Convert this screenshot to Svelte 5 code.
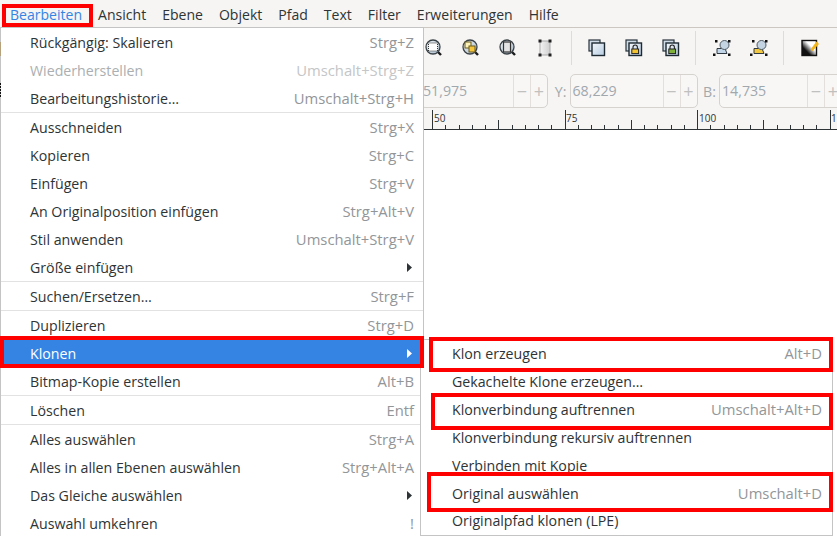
<script>
	const menubar = ['Ansicht', 'Ebene', 'Objekt', 'Pfad', 'Text', 'Filter', 'Erweiterungen', 'Hilfe'];

	// main "Bearbeiten" menu, one array per separated block
	const sections = [
		[
			{ label: 'Rückgängig: Skalieren', key: 'Strg+Z' },
			{ label: 'Wiederherstellen', key: 'Umschalt+Strg+Z', off: true },
			{ label: 'Bearbeitungshistorie…', key: 'Umschalt+Strg+H' }
		],
		[
			{ label: 'Ausschneiden', key: 'Strg+X' },
			{ label: 'Kopieren', key: 'Strg+C' },
			{ label: 'Einfügen', key: 'Strg+V' },
			{ label: 'An Originalposition einfügen', key: 'Strg+Alt+V' },
			{ label: 'Stil anwenden', key: 'Umschalt+Strg+V' },
			{ label: 'Größe einfügen', more: true }
		],
		[{ label: 'Suchen/Ersetzen…', key: 'Strg+F' }],
		[
			{ label: 'Duplizieren', key: 'Strg+D' },
			{ label: 'Klonen', more: true, active: true },
			{ label: 'Bitmap-Kopie erstellen', key: 'Alt+B' }
		],
		[{ label: 'Löschen', key: 'Entf' }],
		[
			{ label: 'Alles auswählen', key: 'Strg+A' },
			{ label: 'Alles in allen Ebenen auswählen', key: 'Strg+Alt+A' },
			{ label: 'Das Gleiche auswählen', more: true },
			{ label: 'Auswahl umkehren', key: '!' }
		]
	];

	const clones = [
		{ label: 'Klon erzeugen', key: 'Alt+D' },
		{ label: 'Gekachelte Klone erzeugen…' },
		{ label: 'Klonverbindung auftrennen', key: 'Umschalt+Alt+D' },
		{ label: 'Klonverbindung rekursiv auftrennen' },
		{ label: 'Verbinden mit Kopie' },
		{ label: 'Original auswählen', key: 'Umschalt+D' },
		{ label: 'Originalpfad klonen (LPE)' }
	];

	const fields = [
		{ name: '', value: '51,975' },
		{ name: 'Y:', value: '68,229' },
		{ name: 'B:', value: '14,735' }
	];

	// ruler: 132.5px per 25 units, one tick every 2.5 units
	const step = 13.25;
	const start = 432;
	const ticks = Array.from({ length: 33 }, (_, i) => ({
		x: Math.round(start + i * step) + 0.5,
		h: i % 10 === 0 ? 19 : i % 5 === 0 ? 9 : 4
	}));
	const rulerLabels = [
		{ x: 434, text: '50' },
		{ x: 566, text: '75' },
		{ x: 699, text: '100' },
		{ x: 831, text: '1' }
	];
</script>

{#snippet row(item)}
	<div class="row" class:off={item.off} class:active={item.active}>
		<span>{item.label}</span>
		{#if item.key}<span class="key">{item.key}</span>{/if}
		{#if item.more}<svg class="more" viewBox="0 0 5 9" width="5" height="9"><path d="M0 0L5 4.5L0 9Z" /></svg>{/if}
	</div>
{/snippet}

{#snippet lens(inner)}
	<svg viewBox="0 0 18 18" width="18" height="18">
		<defs>
			<linearGradient id="glass" x1="0" y1="0" x2="1" y2="1">
				<stop offset="0" stop-color="#eef2f5" />
				<stop offset="1" stop-color="#a9bccb" />
			</linearGradient>
		</defs>
		<path d="M12.5 12.5L16 16" stroke="#1b1b1b" stroke-width="2.4" />
		<circle cx="8" cy="8" r="7" fill="url(#glass)" stroke="#3a4247" stroke-width="1.3" />
		{@render inner()}
	</svg>
{/snippet}

{#snippet lensDots()}
	<rect x="3.5" y="4" width="9" height="8" fill="#fff" stroke="#333" stroke-dasharray="1 1" />
{/snippet}
{#snippet lensSquares()}
	<rect x="3" y="3" width="6" height="6" fill="#fdf2b8" stroke="#6b5a1c" />
	<rect x="7" y="7" width="6" height="6" fill="#f5c63c" stroke="#6b5a1c" />
{/snippet}
{#snippet lensPage()}
	<rect x="4.5" y="3" width="7" height="10" fill="#e4e4e4" stroke="#333" stroke-width="1.2" />
{/snippet}

{#snippet stacked(lock)}
	<svg viewBox="0 0 18 18" width="18" height="18">
		<defs>
			<linearGradient id="sheet" x1="0" y1="0" x2="1" y2="1">
				<stop offset="0" stop-color="#f2f6fa" />
				<stop offset="1" stop-color="#b7cde2" />
			</linearGradient>
		</defs>
		<rect x="1" y="1" width="11" height="11" fill="#cfdce8" stroke="#26323a" stroke-width="1.2" />
		<rect x="4" y="4" width="12.5" height="12.5" fill="url(#sheet)" stroke="#1e2a32" stroke-width="1.4" />
		{#if lock}
			<path d="M8 10V8.2a2.2 2.2 0 0 1 4.4 0V10" fill="none" stroke="#222" stroke-width="1.1" />
			<rect x="6.8" y="10" width="6.8" height="4.6" fill={lock} stroke="#222" />
		{/if}
	</svg>
{/snippet}

{#snippet marked(fill)}
	<svg viewBox="0 0 18 18" width="18" height="18">
		<path d="M4 9.5H12L14 14.5H4Z" fill={fill} stroke="#2f3a42" />
		<circle cx="11.5" cy="6" r="4.5" fill="#c5d4e2" stroke="#4d5a64" />
		<g fill="#111">
			<rect x="0" y="14.5" width="2.5" height="2.5" />
			<rect x="15" y="14.5" width="2.5" height="2.5" />
			<rect x="2" y="1" width="2.5" height="2.5" />
			<rect x="15" y="1" width="2.5" height="2.5" />
		</g>
	</svg>
{/snippet}

<div class="app">
	<nav class="menubar">
		<span class="item current">Bearbeiten</span>
		{#each menubar as name}
			<span class="item">{name}</span>
		{/each}
	</nav>

	<div class="toolbar">
		<div class="tool">{@render lens(lensDots)}</div>
		<div class="tool">{@render lens(lensSquares)}</div>
		<div class="tool">{@render lens(lensPage)}</div>
		<div class="tool">
			<svg viewBox="0 0 14 18" width="14" height="18">
				<defs>
					<linearGradient id="page" x1="0" y1="0" x2="1" y2="0">
						<stop offset="0" stop-color="#f4f4f4" />
						<stop offset="1" stop-color="#cfcfcf" />
					</linearGradient>
				</defs>
				<rect x="2" y="2" width="10" height="14" fill="url(#page)" stroke="#a8a8a8" />
				<g fill="#222">
					<rect x="0.5" y="0.5" width="3" height="3" />
					<rect x="10.5" y="0.5" width="3" height="3" />
					<rect x="0.5" y="14.5" width="3" height="3" />
					<rect x="10.5" y="14.5" width="3" height="3" />
				</g>
			</svg>
		</div>
		<i class="divider first"></i>
		<div class="tool">{@render stacked('')}</div>
		<div class="tool">{@render stacked('#f4c430')}</div>
		<div class="tool">{@render stacked('#7fb03a')}</div>
		<i class="divider"></i>
		<div class="tool">{@render marked('#c3d6e8')}</div>
		<div class="tool">{@render marked('#f2c843')}</div>
		<i class="divider"></i>
		<div class="tool">
			<svg viewBox="0 0 18 18" width="18" height="18">
				<defs>
					<linearGradient id="swatch" x1="0" y1="1" x2="1" y2="0">
						<stop offset="0.3" stop-color="#111" />
						<stop offset="0.62" stop-color="#fff" />
					</linearGradient>
				</defs>
				<path d="M1 1.5H14L1 16.5Z" fill="#fff" />
				<rect x="1" y="1.5" width="14.5" height="15" fill="url(#swatch)" stroke="#111" stroke-width="1.4" />
				<path d="M9.5 10.5L15.5 2.5L18 5L11.5 12Z" fill="#f1b51c" />
			</svg>
		</div>
	</div>

	<div class="fields">
		{#each fields as f}
			{#if f.name}<span class="name">{f.name}</span>{/if}
			<div class="spin">
				<span class="value">{f.value}</span>
				<span class="btn">−</span>
				<span class="btn">+</span>
			</div>
		{/each}
	</div>

	<svg class="ruler" viewBox="0 0 837 20" width="837" height="20">
		{#each ticks as t}
			<line x1={t.x} x2={t.x} y1={19 - t.h} y2="19" />
		{/each}
		{#each rulerLabels as l}
			<text x={l.x} y="12">{l.text}</text>
		{/each}
		<rect x="0" y="19" width="837" height="1" />
	</svg>

	<div class="canvas"></div>

	<!-- slivers of the canvas showing left of the open menu -->
	<i class="sliver tan"></i>
	<i class="sliver dots"></i>

	<div class="menu main">
		{#each sections as section, i}
			{#if i > 0}<hr />{/if}
			{#each section as item}
				{@render row(item)}
			{/each}
		{/each}
	</div>

	<div class="menu sub">
		{#each clones as item}
			{@render row(item)}
		{/each}
	</div>

	<!-- red annotation frames -->
	<i class="mark m-bar"></i>
	<i class="mark m-klonen"></i>
	<i class="mark m-erzeugen"></i>
	<i class="mark m-trennen"></i>
	<i class="mark m-original"></i>
</div>

<style>
	:global(body) {
		margin: 0;
	}
	.app {
		position: relative;
		display: flex;
		flex-direction: column;
		width: 837px;
		height: 536px;
		overflow: hidden;
		background: #f6f5f4;
		color: #2e3436;
		font-family: 'Open Sans', sans-serif;
		font-size: 14.2px;
	}

	.menubar {
		display: flex;
		flex: none;
		align-items: center;
		box-sizing: border-box;
		height: 28px;
		padding: 2px 0 0 2px;
		border-bottom: 1px solid #cdc7c2;
		font-size: 14.05px;
	}
	.item {
		padding: 0 8px;
	}
	.current {
		color: #3584e4;
	}

	.toolbar {
		display: flex;
		flex: none;
		align-items: center;
		height: 40px;
		padding: 0 0 0 415px;
	}
	.tool {
		display: flex;
		flex: none;
		justify-content: center;
		align-items: center;
		width: 37px;
		height: 40px;
	}
	.divider {
		flex: none;
		width: 1px;
		height: 34px;
		margin: 0 7px 0 6px;
		background: #dedbd8;
	}
	.divider.first {
		margin: 0 6px 0 8px;
	}

	.fields {
		display: flex;
		flex: none;
		align-items: center;
		height: 34px;
		margin-top: 6px;
		padding-left: 420px;
		color: #a3a9ab;
	}
	.name {
		flex: none;
		box-sizing: border-box;
		width: 21.5px;
		padding-right: 3px;
		text-align: right;
	}
	.spin {
		display: flex;
		flex: none;
		align-items: stretch;
		box-sizing: border-box;
		width: 128px;
		height: 34px;
		border: 1px solid #d6d2ce;
		border-radius: 5px;
		background: #f8f7f6;
		line-height: 32px;
	}
	.spin:last-child {
		width: 123px;
	}
	.value {
		flex: 1;
		padding-left: 2px;
		color: #a0a8ae;
	}
	.btn {
		box-sizing: border-box;
		width: 17px;
		text-align: center;
		border-left: 1px solid #e2dfdc;
		color: #c0c0bf;
		font-size: 18px;
	}

	.ruler {
		flex: none;
		margin-top: 2px;
		background: #f6f5f4;
	}
	.ruler line {
		stroke: #2e3436;
		stroke-width: 1;
	}
	.ruler text {
		fill: #2e3436;
		font-family: 'Open Sans', sans-serif;
		font-size: 10px;
	}
	.ruler rect {
		fill: #2e3436;
	}

	.canvas {
		flex: 1;
		background: #fff;
	}

	.menu {
		position: absolute;
		box-sizing: border-box;
		background: #fff;
		border: 1px solid #c4c4c4;
	}
	.main {
		left: 0;
		top: 27px;
		width: 424px;
		height: 520px;
		padding-top: 1px;
	}
	.sub {
		left: 420px;
		top: 339px;
		width: 413px;
		height: 197px;
	}
	.row {
		display: flex;
		justify-content: space-between;
		align-items: center;
		box-sizing: border-box;
		height: 28px;
		padding: 0 9px 2px 29px;
	}
	.sub .row {
		padding: 0 10px 2px 31px;
	}
	.sub .row:last-child {
		height: 27px;
	}
	.key {
		color: #929699;
		font-size: 14.8px;
	}
	.off {
		color: #abafb1;
	}
	.off .key {
		color: #c4c6c7;
	}
	.active {
		background: #3584e4;
		color: #fff;
	}
	.more {
		fill: #2e3436;
		margin-right: 2px;
	}
	.active .more {
		fill: #fff;
	}
	hr {
		height: 1px;
		margin: -1px 0 1px;
		border: 0;
		background: #e2e2e2;
	}

	.sliver {
		position: absolute;
		left: 0;
		width: 1px;
	}
	.tan {
		top: 42px;
		height: 14px;
		background: #b5a27c;
		z-index: 1;
	}
	.dots {
		top: 83px;
		height: 15px;
		background: repeating-linear-gradient(#111 0 2px, #ccc 2px 3px);
		z-index: 1;
	}

	.mark {
		position: absolute;
		box-sizing: border-box;
		border: 4px solid #f00;
		z-index: 2;
	}
	.m-bar {
		left: 2px;
		top: 4px;
		width: 91px;
		height: 23px;
	}
	.m-klonen {
		left: 0;
		top: 336px;
		width: 424px;
		height: 32px;
	}
	.m-erzeugen {
		left: 429px;
		top: 337px;
		width: 404px;
		height: 35px;
	}
	.m-trennen {
		left: 431px;
		top: 393px;
		width: 402px;
		height: 37px;
	}
	.m-original {
		left: 427px;
		top: 472px;
		width: 406px;
		height: 40px;
	}
</style>
